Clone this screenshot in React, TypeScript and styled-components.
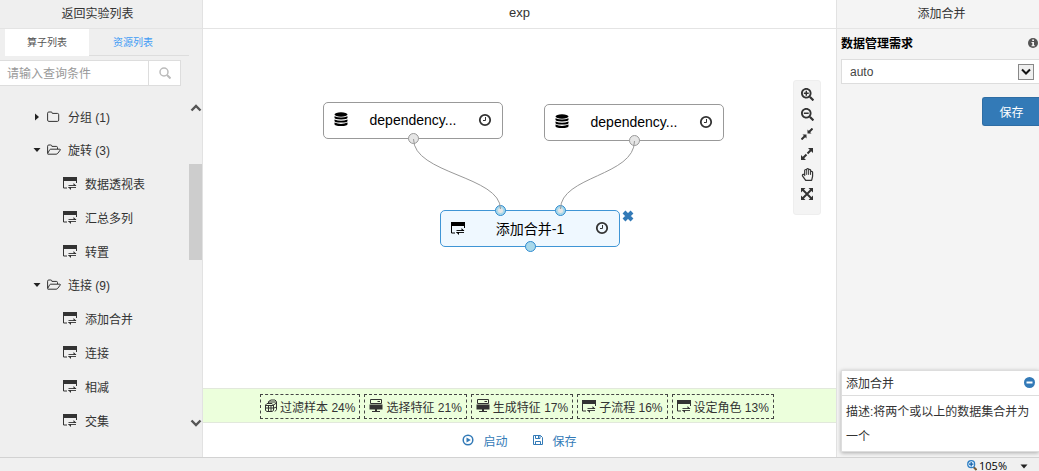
import React, { useState } from "react";
import styled, { createGlobalStyle, css } from "styled-components";
import { FaSearchPlus, FaSearchMinus, FaRegHandPaper } from "react-icons/fa";

const Global = createGlobalStyle`
  * { box-sizing: border-box; }
  body { margin: 0; }
  body, button, input, select {
    font-family: "Liberation Sans", "Noto Sans CJK SC", sans-serif;
    font-size: 12px;
    color: #333;
  }
  svg { display: block; flex: none; }
  a { color: inherit; text-decoration: none; }
  button { background: none; border: 0; padding: 0; cursor: pointer; }
`;

/* ---------- icons ---------- */

const TableIcon = ({ size = 14 }: { size?: number }) => (
  <svg width={size} height={size} viewBox="0 0 14 14" fill="none" stroke="currentColor">
    <path d="M0 1h14v4H0z" fill="currentColor" stroke="none" />
    <path d="M0.500 5v7h3.500M13.500 5v2" />
    <path d="M5.500 9.500h7.500M13 11.500H5.500" strokeWidth="0.900" />
    <path d="M10.500 7l3 2.900h-3zM8 14l-3 -2.900h3z" fill="currentColor" stroke="none" />
  </svg>
);

const ScreenIcon = () => (
  <svg width="14" height="14" viewBox="0 0 14 14" fill="none" stroke="currentColor">
    <path d="M1.500 0.500h11v4h-11zM8.500 2.500h2.500" />
    <path d="M0.500 5.500h13v5h-13z" fill="currentColor" stroke="none" />
    <path d="M6 10h2v2h3v1H3v-1h3z" fill="currentColor" stroke="none" />
  </svg>
);

const BoxesIcon = () => (
  <svg width="12" height="14" viewBox="0 0 12 14" fill="none" stroke="currentColor">
    <path d="M3.500 4V2.500L6 1h4l1.500 1.500v8L10 12.500" />
    <path d="M0.500 6L2 4.500h5L8.500 6v5.500L7 12.500H2L0.500 11.500zM0.500 6.500h8M0.500 9h8M3.500 6v6.500M6 6v6.500M4 3h7M8.500 6L11.500 4M9 9l2.500 -1" />
  </svg>
);

const DatabaseIcon = () => (
  <svg width="14" height="15" viewBox="0 0 14 15" fill="currentColor">
    <ellipse cx="7" cy="2.500" rx="6.500" ry="2.200" />
    <path d="M0.500 4.200q6.500 2.800 13 0v1.500q0 1.700 -6.500 1.700t-6.500 -1.700zM0.500 7.400q6.500 2.800 13 0v1.500q0 1.700 -6.500 1.700t-6.500 -1.700zM0.500 10.600q6.500 2.800 13 0v1.700q0 1.800 -6.500 1.800t-6.500 -1.800z" />
  </svg>
);

const ClockIcon = () => (
  <svg width="14" height="14" viewBox="0 0 14 14" fill="none" stroke="#333">
    <circle cx="7" cy="7" r="5.200" strokeWidth="1.800" />
    <path d="M7.500 4v3.500H5" strokeWidth="1" />
  </svg>
);

const FolderIcon = () => (
  <svg width="14" height="12" viewBox="0 0 14 12" fill="none" stroke="currentColor" strokeLinejoin="round">
    <path d="M0.600 2.200q0 -1.200 1.200 -1.200h2.400q1.100 0 1.100 1.400h5.100q1.300 0 1.300 1.300v5.400q0 1.300 -1.300 1.300H1.900q-1.300 0 -1.300 -1.300z" />
  </svg>
);

const FolderOpenIcon = () => (
  <svg width="14" height="12" viewBox="0 0 14 12" fill="none" stroke="currentColor" strokeLinejoin="round">
    <path d="M0.600 9V2.200q0 -1.200 1.200 -1.200h1.900q1.200 0 1.200 1.400h4.400q1.200 0 1.200 1.200V5" />
    <path d="M3.600 5.200h9.200q0.900 0 0.400 0.900l-2.400 3.200q-0.700 0.900 -1.700 0.900H1q-0.800 0 -0.300 -0.800l1.900 -3.500q0.400 -0.700 1 -0.700z" />
  </svg>
);

const Caret = ({ open }: { open: boolean }) => (
  <svg width="8" height="8" viewBox="0 0 8 8" fill="#222">
    <path d={open ? "M0.500 2h7L4 6z" : "M2 0.500v7L6 4z"} />
  </svg>
);

const Chevron = ({ down }: { down?: boolean }) => (
  <svg width="12" height="10" viewBox="0 0 12 10" fill="none" stroke="#555" strokeWidth="2.400">
    <path d={down ? "M1.500 2.500L6 7l4.500 -4.500" : "M1.500 7.500L6 3l4.500 4.500"} />
  </svg>
);

const SearchIcon = () => (
  <svg width="12" height="12" viewBox="0 0 12 12" fill="none" stroke="#bbb" strokeWidth="1.500">
    <circle cx="5" cy="5" r="4" />
    <path d="M8 8l3.500 3.500" strokeWidth="2" />
  </svg>
);

const CompressIcon = () => (
  <svg width="12" height="12" viewBox="0 0 12 12" fill="currentColor" stroke="currentColor">
    <path d="M6.500 1.500v4h4zM5.500 10.500v-4h-4z" stroke="none" />
    <path d="M7.500 4.500L11.500 0.500M4.500 7.500L0.500 11.500" strokeWidth="2" />
  </svg>
);

const ExpandIcon = () => (
  <svg width="12" height="12" viewBox="0 0 12 12" fill="currentColor" stroke="currentColor">
    <path d="M7 0h5v5zM0 7v5h5z" stroke="none" />
    <path d="M6.500 5.500L10.500 1.500M5.500 6.500L1.500 10.500" strokeWidth="2" />
  </svg>
);

const ArrowsIcon = () => (
  <svg width="12" height="12" viewBox="0 0 12 12" fill="currentColor" stroke="currentColor">
    <path d="M0 0h4.500L0 4.500zM12 0v4.500L7.500 0zM0 12V7.500L4.500 12zM12 12H7.500L12 7.500z" stroke="none" />
    <path d="M1.500 1.500l9 9M10.500 1.500l-9 9" strokeWidth="1.900" />
  </svg>
);

const PlayIcon = () => (
  <svg width="12" height="12" viewBox="0 0 12 12" fill="none" stroke="currentColor">
    <circle cx="6" cy="6" r="4.800" strokeWidth="1.500" />
    <path d="M4.500 3.400v5.200L8.800 6z" fill="currentColor" stroke="none" />
  </svg>
);

const SaveIcon = () => (
  <svg width="12" height="12" viewBox="0 0 12 12" fill="none" stroke="currentColor">
    <path d="M1.500 1.500h7l2 2v7h-9zM3.500 1.500v3h4.500v-3M3.500 10.500v-3h5v3M6.500 2v2" />
  </svg>
);

const InfoIcon = () => (
  <svg width="10" height="10" viewBox="0 0 10 10">
    <circle cx="5" cy="5" r="5" fill="#555" />
    <path d="M4.200 1.500h1.800v1.400H4.200zM3.500 4h2.500v3.200h0.800v1H3.500v-1h0.800V5H3.500z" fill="#f4f4f4" />
  </svg>
);

const MinusIcon = () => (
  <svg width="11" height="11" viewBox="0 0 11 11">
    <circle cx="5.500" cy="5.500" r="5.500" fill="#337ab7" />
    <path d="M2.500 4.500h6v2h-6z" fill="#fff" />
  </svg>
);

const CrossIcon = () => (
  <svg width="12" height="12" viewBox="0 0 12 12" stroke="#337ab7" strokeWidth="4">
    <path d="M2 2l8 8M10 2l-8 8" />
  </svg>
);

const ZoomStatusIcon = () => (
  <svg width="10" height="11" viewBox="0 0 10 11" fill="none">
    <path d="M6 6.500l3.500 3.500" stroke="#7a5c3a" strokeWidth="2" />
    <circle cx="4.200" cy="4.200" r="3.500" fill="#d9ecfa" stroke="#2f7fc4" strokeWidth="1.200" />
    <path d="M4.200 2v4.400M2 4.200h4.400" stroke="#1560a8" strokeWidth="1.200" />
  </svg>
);

/* ---------- layout ---------- */

const Page = styled.div`
  display: flex;
  flex-direction: column;
  min-height: 100vh;
  background: #fff;
`;

const Columns = styled.div`
  flex: 1;
  display: grid;
  grid-template-columns: 203px 1fr 203px;
`;

const Sidebar = styled.aside`
  display: flex;
  flex-direction: column;
  background: #efefef;
  border-right: 1px solid #e2e2e2;
`;

const Main = styled.main`
  display: flex;
  flex-direction: column;
  min-width: 0;
`;

const Panel = styled.aside`
  display: flex;
  flex-direction: column;
  background: #f4f4f4;
  border-left: 1px solid #e2e2e2;
`;

const Header = styled.header<{ $shift?: "left" | "right" }>`
  display: flex;
  align-items: center;
  justify-content: center;
  height: 29px;
  padding-bottom: 4px;
  border-bottom: 1px solid #e4e4e4;
  ${(p) => p.$shift === "left" && css`padding-right: 7px;`}
  ${(p) => p.$shift === "right" && css`padding-left: 7px;`}
`;

const Title = styled.span`
  font-size: 13px;
`;

/* ---------- sidebar ---------- */

const Tabs = styled.div`
  display: flex;
  margin: 0 13px 0 5px;
  height: 27px;
  border-bottom: 1px solid #ddd;
`;

const Tab = styled.button<{ $active?: boolean }>`
  height: 27px;
  width: ${(p) => (p.$active ? 84 : 88)}px;
  padding-bottom: 2px;
  font-size: 10px;
  color: ${(p) => (p.$active ? "#555" : "#3d9bf5")};
  background: ${(p) => (p.$active ? "#fff" : "transparent")};
`;

const Search = styled.form`
  display: flex;
  width: 181px;
  height: 26px;
  margin-top: 4px;
  background: #fff;
  border: 1px solid #ddd;
  border-left: 0;
`;

const SearchInput = styled.input`
  flex: 1;
  min-width: 0;
  padding: 1px 7px 0;
  border: 0;
  background: none;
  outline: 0;
  &::placeholder { color: #999; opacity: 1; }
`;

const SearchButton = styled.button`
  display: flex;
  align-items: center;
  justify-content: center;
  width: 32px;
  border-left: 1px solid #ddd;
`;

const TreeArea = styled.div`
  flex: 1;
  display: flex;
  padding-top: 14px;
`;

const Tree = styled.ul`
  flex: 1;
  margin: 0;
  padding: 0;
  list-style: none;
`;

const FolderRow = styled.button`
  display: flex;
  align-items: center;
  width: 100%;
  height: 33px;
  padding-left: 33px;
  svg + svg { margin: 0 7px 0 6px; }
`;

const LeafRow = styled.a`
  display: flex;
  align-items: center;
  gap: 8px;
  height: 34px;
  padding-left: 63px;
`;

const ScrollBar = styled.div`
  display: flex;
  flex-direction: column;
  align-items: center;
  width: 13px;
  padding: 3px 0 29px;
`;

const Thumb = styled.div`
  width: 13px;
  height: 96px;
  margin: 51px 0 auto;
  background: #cdcdcd;
`;

/* ---------- canvas ---------- */

const Canvas = styled.section`
  flex: 1;
  position: relative;
  min-height: 359px;
  overflow: hidden;
`;

const Node = styled.div<{ $x: number; $y: number; $active?: boolean }>`
  position: absolute;
  left: ${(p) => p.$x}px;
  top: ${(p) => p.$y}px;
  display: flex;
  align-items: center;
  justify-content: space-between;
  width: 180px;
  height: 37px;
  padding: 0 10px 2px;
  border: 1px solid ${(p) => (p.$active ? "#3f95d5" : "#999")};
  border-radius: 5px;
  background: ${(p) => (p.$active ? "#eff8ff" : "#fff")};
  color: #000;
  font-size: 14px;
`;

const Port = styled.i<{ $x: number; $bottom?: boolean; $active?: boolean }>`
  position: absolute;
  left: ${(p) => p.$x}px;
  ${(p) => (p.$bottom ? "bottom: -6px;" : "top: -6px;")}
  width: 11px;
  height: 11px;
  border: 1px solid ${(p) => (p.$active ? "#2f8bd0" : "#999")};
  border-radius: 50%;
  background: ${(p) => (p.$active ? "#a8d8ea" : "#e6e6e6")};
`;

const RemoveButton = styled.button`
  position: absolute;
  left: 181px;
  top: -1px;
`;

const Wires = styled.svg`
  position: absolute;
  left: 0;
  top: 0;
  pointer-events: none;
`;

const Tools = styled.div`
  position: absolute;
  right: 15px;
  top: 51px;
  display: flex;
  flex-direction: column;
  align-items: center;
  width: 28px;
  height: 135px;
  padding-top: 3px;
  border: 1px solid #eee;
  border-radius: 3px;
  background: #f4f4f4;
`;

const ToolButton = styled.button`
  display: flex;
  align-items: center;
  justify-content: center;
  width: 20px;
  height: 20px;
`;

const Suggestions = styled.div`
  display: flex;
  align-items: center;
  justify-content: center;
  gap: 4px;
  height: 35px;
  padding-top: 2px;
  padding-right: 5px;
  background: #ecffdc;
  border-top: 1px solid #e2e8dc;
  border-bottom: 1px solid #e2e8dc;
`;

const Chip = styled.button`
  display: flex;
  align-items: center;
  gap: 3px;
  height: 25px;
  padding: 0 4px 1px;
  border: 1px dashed #444;
  white-space: nowrap;
`;

const Actions = styled.div`
  display: flex;
  align-items: center;
  justify-content: center;
  gap: 24px;
  height: 34px;
`;

const Action = styled.button`
  display: flex;
  align-items: center;
  gap: 9px;
  color: #337ab7;
`;

/* ---------- right panel ---------- */

const FieldHead = styled.div`
  display: flex;
  align-items: center;
  justify-content: space-between;
  height: 30px;
  padding: 0 1px 2px 4px;
  color: #000;
  font-weight: bold;
`;

const FieldLabel = styled.label`
  padding-bottom: 2px;
`;

const SelectBox = styled.div`
  position: relative;
  margin-left: 4px;
`;

const Select = styled.select`
  appearance: none;
  display: block;
  width: 100%;
  height: 25px;
  padding: 0 24px 0 8px;
  border: 1px solid #ddd;
  border-right: 0;
  border-radius: 0;
  background: #fff;
  color: #444;
`;

const SelectArrow = styled.span`
  position: absolute;
  right: 5px;
  top: 5px;
  display: flex;
  align-items: center;
  justify-content: center;
  width: 16px;
  height: 16px;
  border: 1px solid #888;
  background: #efefef;
  pointer-events: none;
`;

const SaveButton = styled.button`
  align-self: flex-end;
  width: 57px;
  height: 29px;
  margin-top: 13px;
  padding-left: 1px;
  border: 1px solid #2e6da4;
  border-right: 0;
  border-radius: 3px 0 0 3px;
  background: #337ab7;
  color: #fff;
`;

const Help = styled.section`
  margin: auto 0 5px 4px;
  border: 1px solid #ddd;
  border-right: 0;
  background: #fff;
  box-shadow: 0 1px 4px rgba(0, 0, 0, 0.3);
`;

const HelpHead = styled.div`
  display: flex;
  align-items: center;
  justify-content: space-between;
  height: 25px;
  padding: 0 4px 2px;
  border-bottom: 1px solid #ddd;
`;

const HelpText = styled.p`
  margin: 0;
  padding: 4px 4px 1px;
  line-height: 25px;
`;

const StatusBar = styled.footer`
  display: flex;
  align-items: center;
  justify-content: flex-end;
  gap: 2px;
  height: 14px;
  padding: 2px 11px 0 0;
  border-top: 1px solid #d2d2d2;
  background: #f0f0f0;
  color: #000;
  font-family: "Open Sans", "Noto Sans", sans-serif;
  font-size: 11px;
  line-height: 11px;
`;

const StatusCaret = styled.span`
  padding: 2px 0 0 11px;
`;

/* ---------- data ---------- */

const tree = [
  { name: "分组", count: 1, open: false, items: [] as string[] },
  { name: "旋转", count: 3, open: true, items: ["数据透视表", "汇总多列", "转置"] },
  { name: "连接", count: 9, open: true, items: ["添加合并", "连接", "相减", "交集"] },
];

const chips = [
  { icon: <BoxesIcon />, label: "过滤样本 24%" },
  { icon: <ScreenIcon />, label: "选择特征 21%" },
  { icon: <ScreenIcon />, label: "生成特征 17%" },
  { icon: <TableIcon />, label: "子流程 16%" },
  { icon: <TableIcon />, label: "设定角色 13%" },
];

const tools = [
  { label: "放大", icon: <FaSearchPlus size={13} /> },
  { label: "缩小", icon: <FaSearchMinus size={13} /> },
  { label: "收缩", icon: <CompressIcon /> },
  { label: "展开", icon: <ExpandIcon /> },
  { label: "拖动", icon: <FaRegHandPaper size={13} /> },
  { label: "全屏", icon: <ArrowsIcon /> },
];

export default function App() {
  const [open, setOpen] = useState(tree.map((g) => g.open));
  const [query, setQuery] = useState("");
  const toggle = (i: number) => setOpen(open.map((v, n) => (n === i ? !v : v)));

  return (
    <Page>
      <Global />
      <Columns>
        <Sidebar>
          <Header $shift="left">
            <a href="#list">返回实验列表</a>
          </Header>
          <Tabs role="tablist">
            <Tab role="tab" aria-selected $active>算子列表</Tab>
            <Tab role="tab" aria-selected={false}>资源列表</Tab>
          </Tabs>
          <Search onSubmit={(e) => e.preventDefault()}>
            <SearchInput
              aria-label="查询条件"
              placeholder="请输入查询条件"
              value={query}
              onChange={(e) => setQuery(e.target.value)}
            />
            <SearchButton aria-label="查询"><SearchIcon /></SearchButton>
          </Search>
          <TreeArea>
            <Tree>
              {tree.map((g, i) => (
                <li key={g.name}>
                  <FolderRow aria-expanded={open[i]} onClick={() => toggle(i)}>
                    <Caret open={open[i]} />
                    {open[i] ? <FolderOpenIcon /> : <FolderIcon />}
                    {g.name} ({g.count})
                  </FolderRow>
                  {open[i] && g.items.map((name) => (
                    <LeafRow key={name} href="#operator"><TableIcon />{name}</LeafRow>
                  ))}
                </li>
              ))}
            </Tree>
            <ScrollBar>
              <Chevron />
              <Thumb />
              <Chevron down />
            </ScrollBar>
          </TreeArea>
        </Sidebar>

        <Main>
          <Header><Title>exp</Title></Header>
          <Canvas>
            <Node $x={120} $y={73}>
              <DatabaseIcon />dependency...<ClockIcon />
              <Port $x={84} $bottom />
            </Node>
            <Node $x={341} $y={75}>
              <DatabaseIcon />dependency...<ClockIcon />
              <Port $x={84} $bottom />
            </Node>
            <Node $x={237} $y={181} $active>
              <TableIcon />添加合并-1<ClockIcon />
              <Port $x={54} $active />
              <Port $x={114} $active />
              <Port $x={84} $bottom $active />
              <RemoveButton aria-label="删除"><CrossIcon /></RemoveButton>
            </Node>
            <Wires width="600" height="260" viewBox="0 0 600 260" fill="none" stroke="#999">
              <circle cx="297.500" cy="181.500" r="2.500" fill="#e6e6e6" stroke="none" />
              <circle cx="357.500" cy="181.500" r="2.500" fill="#e6e6e6" stroke="none" />
              <path d="M210.500 110C210.500 145 297.500 147 297.500 180" />
              <path d="M431.500 112C431.500 147 357.500 147 357.500 180" />
            </Wires>
            <Tools>
              {tools.map((t) => (
                <ToolButton key={t.label} aria-label={t.label}>{t.icon}</ToolButton>
              ))}
            </Tools>
          </Canvas>
          <Suggestions>
            {chips.map((c) => (
              <Chip key={c.label}>{c.icon}{c.label}</Chip>
            ))}
          </Suggestions>
          <Actions>
            <Action><PlayIcon />启动</Action>
            <Action><SaveIcon />保存</Action>
          </Actions>
        </Main>

        <Panel>
          <Header $shift="right">添加合并</Header>
          <FieldHead>
            <FieldLabel htmlFor="requirement">数据管理需求</FieldLabel>
            <InfoIcon />
          </FieldHead>
          <SelectBox>
            <Select id="requirement" defaultValue="auto">
              <option value="auto">auto</option>
            </Select>
            <SelectArrow>
              <svg width="10" height="8" viewBox="0 0 10 8" fill="none" stroke="#111" strokeWidth="2">
                <path d="M1 1.500l4 4l4 -4" />
              </svg>
            </SelectArrow>
          </SelectBox>
          <SaveButton>保存</SaveButton>
          <Help>
            <HelpHead>
              添加合并
              <button aria-label="收起"><MinusIcon /></button>
            </HelpHead>
            <HelpText>描述:将两个或以上的数据集合并为一个</HelpText>
          </Help>
        </Panel>
      </Columns>
      <StatusBar>
        <ZoomStatusIcon />
        105%
        <StatusCaret>
          <svg width="8" height="5" viewBox="0 0 8 5"><path d="M0.500 0.500h7L4 4.500z" fill="#222" /></svg>
        </StatusCaret>
      </StatusBar>
    </Page>
  );
}
